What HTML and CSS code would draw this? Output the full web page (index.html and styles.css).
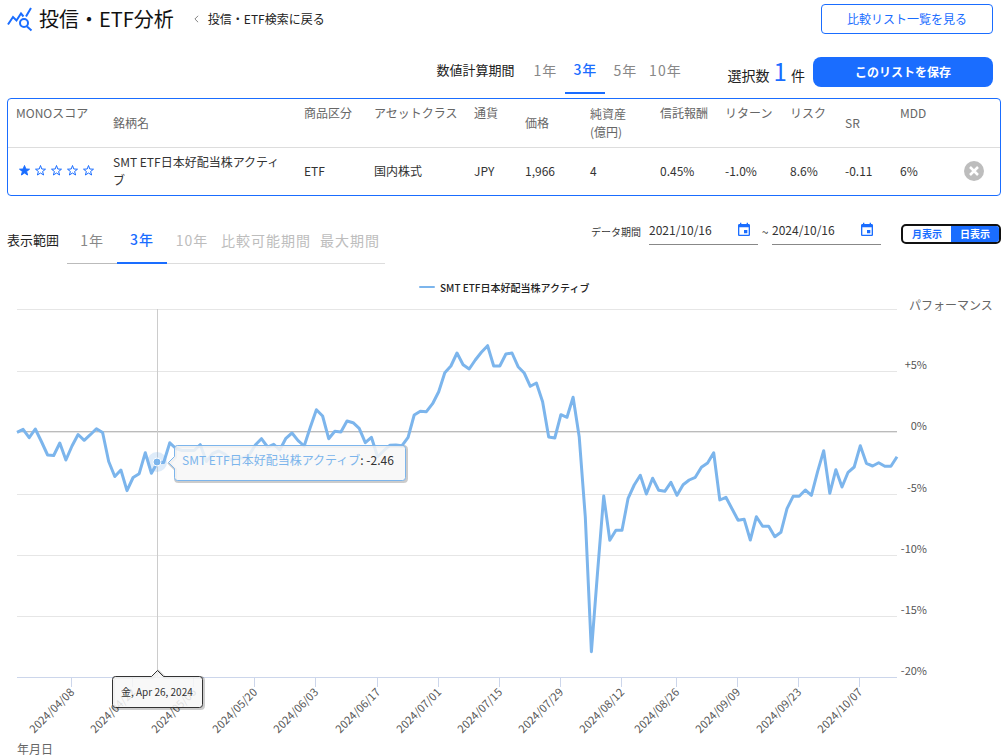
FILE: index.html
```html
<!DOCTYPE html>
<html lang="ja">
<head>
<meta charset="utf-8">
<title>投信・ETF分析</title>
<link rel="stylesheet" href="styles.css">
</head>
<body>
<header class="header">
  <svg class="logo" viewBox="0 0 26 26" aria-hidden="true"><path d="M1 18.500 6 11l3.500 3.500L14 7.500l2.500 3M19 10.500 24 2M20 20.500l4.500 4"/><circle cx="17" cy="17" r="4"/></svg>
  <h1 class="title">投信・ETF分析</h1>
  <a class="back" href="#"><svg class="chevron" viewBox="0 0 6 10" aria-hidden="true"><path d="M5 1 1 5l4 4"/></svg>投信・ETF検索に戻る</a>
  <button class="btn btn-outline" type="button">比較リスト一覧を見る</button>
</header>

<section class="controls">
  <span class="label">数値計算期間</span>
  <nav class="tabs calc-tabs">
    <button class="tab" type="button">1年</button>
    <button class="tab active" type="button">3年</button>
    <button class="tab" type="button">5年</button>
    <button class="tab" type="button">10年</button>
  </nav>
  <p class="count">選択数 <strong class="count-num">1</strong> 件</p>
  <button class="btn btn-solid" type="button">このリストを保存</button>
</section>

<div class="table-box">
  <table class="funds">
    <colgroup><col class="c-score"><col class="c-name"><col class="c-kind"><col class="c-class"><col class="c-cur"><col class="c-price"><col class="c-net"><col class="c-fee"><col class="c-ret"><col class="c-risk"><col class="c-sr"><col class="c-mdd"><col class="c-del"></colgroup>
    <thead>
      <tr><th class="top">MONOスコア</th><th>銘柄名</th><th class="top">商品区分</th><th class="top">アセットクラス</th><th class="top">通貨</th><th>価格</th><th>純資産<br>(億円)</th><th class="top">信託報酬</th><th class="top">リターン</th><th class="top">リスク</th><th>SR</th><th class="top">MDD</th><th></th></tr>
    </thead>
    <tbody>
      <tr>
        <td><svg class="stars" viewBox="0 0 80 16" role="img" aria-label="1 / 5">
          <defs><path id="star" d="M8 2.500 9.300 6 13 6.200 10.100 8.500 11.100 12 8 10 4.900 12 5.900 8.500 3 6.200 6.700 6Z"/></defs>
          <use class="star-on" href="#star"/><use href="#star" x="16"/><use href="#star" x="32"/><use href="#star" x="48"/><use href="#star" x="64"/>
        </svg></td>
        <td>SMT ETF日本好配当株アクティブ</td><td>ETF</td><td>国内株式</td><td>JPY</td><td>1,966</td><td>4</td><td>0.45%</td><td>-1.0%</td><td>8.6%</td><td>-0.11</td><td>6%</td>
        <td><button class="delete" type="button" aria-label="削除"><svg viewBox="0 0 20 20"><circle cx="10" cy="10" r="10"/><path d="m6 6 8 8m0-8-8 8"/></svg></button></td>
      </tr>
    </tbody>
  </table>
</div>

<section class="range">
  <span class="label">表示範囲</span>
  <nav class="tabs range-tabs">
    <button class="tab enabled" type="button">1年</button>
    <button class="tab active" type="button">3年</button>
    <button class="tab" type="button" disabled>10年</button>
    <button class="tab" type="button" disabled>比較可能期間</button>
    <button class="tab" type="button" disabled>最大期間</button>
  </nav>
  <div class="dates">
    <label class="dates-label" for="from">データ期間</label>
    <span class="date"><input id="from" type="text" value="2021/10/16"><svg viewBox="0 0 24 24" aria-hidden="true"><path d="M17 12h-5v5h5v-5zM16 1v2H8V1H6v2H5c-1.11 0-1.99.9-1.99 2L3 19c0 1.1.89 2 2 2h14c1.1 0 2-.9 2-2V5c0-1.1-.9-2-2-2h-1V1h-2zm3 18H5V8h14v11z"/></svg></span>
    <span class="tilde">~</span>
    <span class="date"><input type="text" value="2024/10/16" aria-label="終了日"><svg viewBox="0 0 24 24" aria-hidden="true"><path d="M17 12h-5v5h5v-5zM16 1v2H8V1H6v2H5c-1.11 0-1.99.9-1.99 2L3 19c0 1.1.89 2 2 2h14c1.1 0 2-.9 2-2V5c0-1.1-.9-2-2-2h-1V1h-2zm3 18H5V8h14v11z"/></svg></span>
  </div>
  <div class="switch">
    <button class="seg" type="button">月表示</button>
    <button class="seg seg-on" type="button">日表示</button>
  </div>
</section>

<svg class="chart" viewBox="0 272 1008 484" role="img" aria-label="パフォーマンス">
  <path class="legend-line" d="M420 287h14"/>
  <text class="legend" x="440" y="292">SMT ETF日本好配当株アクティブ</text>
  <text class="axis-title" x="909" y="310">パフォーマンス</text>
  <path class="grid" d="M17 309.500H897M17 371.500H897M17 432.500H897M17 494.500H897M17 555.500H897M17 616.500H897"/>
  <path class="zero" d="M17 431.500H897"/>
  <path class="axis" d="M17 677.500H897M71.500 678v9M132.500 678v9M193.500 678v9M254.500 678v9M315.500 678v9M377.500 678v9M438.500 678v9M499.500 678v9M560.500 678v9M621.500 678v9M676.500 678v9M737.500 678v9M798.500 678v9M859.500 678v9"/>
  <g class="ylabels">
    <text x="927" y="369">+5%</text><text x="927" y="430">0%</text><text x="927" y="492">-5%</text><text x="927" y="553">-10%</text><text x="927" y="614">-15%</text><text x="927" y="675">-20%</text>
  </g>
  <g id="dates" class="xlabels"></g>
  <text class="axis-title" x="17" y="754">年月日</text>
  <path class="crosshair" d="M157.500 309V678"/>
  <polyline id="series" class="series"/>
  <circle class="halo" cx="157" cy="462" r="10"/>
  <circle class="dot" cx="157" cy="462" r="4"/>
  <defs>
    <path id="tip-series" d="M177.500 445.500H402.500q3 0 3 3V477.500q0 3-3 3H177.500q-3 0-3-3V468.500L168.500 462.500 174.500 456.500V448.500q0-3 3-3Z"/>
    <path id="tip-date" d="M115.500 676.500H151.500L157.500 670.500 163.500 676.500H199.500q3 0 3 3V704.500q0 3-3 3H115.500q-3 0-3-3V679.500q0-3 3-3Z"/>
  </defs>
  <use class="tip-shadow" href="#tip-series" x="1" y="1"/>
  <use class="tip tip-series" href="#tip-series"/>
  <text class="tip-text" x="182" y="465"><tspan class="tip-name">SMT ETF日本好配当株アクティブ</tspan>: -2.46</text>
  <use class="tip-shadow" href="#tip-date" x="1" y="1"/>
  <use class="tip tip-date" href="#tip-date"/>
  <text class="tip-day" x="121" y="696">金, Apr 26, 2024</text>
</svg>
<script src="chart.js"></script>
</body>
</html>
```
FILE: styles.css
```css
* { box-sizing: border-box; }
body {
  margin: 0;
  font-family: "Noto Sans CJK JP", "Noto Sans", sans-serif;
  font-size: 12px;
  line-height: 18px;
  color: #333;
  background: #fff;
  overflow-x: hidden;
}
button, input { font: inherit; color: inherit; background: none; border: 0; padding: 0; margin: 0; }
button { cursor: pointer; }

.header { display: flex; align-items: center; height: 40px; padding: 0 15px 2px 7px; }
.logo { width: 26px; height: 26px; fill: none; stroke: #1a6dff; stroke-width: 2; }
.title { margin: 0 0 0 6px; font-size: 20px; line-height: 30px; font-weight: 400; color: #111; }
.back { display: flex; align-items: center; gap: 9px; margin-left: 20px; color: #222; text-decoration: none; }
.chevron { width: 5px; height: 8px; fill: none; stroke: #666; }
.btn { text-align: center; }
.btn-outline { margin-left: auto; width: 172px; height: 30px; border: 1px solid #1a6dff; border-radius: 4px; color: #1a6dff; }
.btn-solid { width: 180px; height: 30px; border-radius: 8px; background: #1a6dff; color: #fff; font-weight: 700; }

.controls { display: flex; align-items: center; justify-content: flex-end; height: 58px; padding: 0 15px 4px 0; }
.controls .btn-solid { margin: 10px 0 0 8px; }
.label { font-size: 13px; color: #222; }
.controls .label { margin-top: 6px; }
.tabs { display: flex; }
.tab { font-size: 14px; letter-spacing: 1px; color: #888; white-space: nowrap; }
.tab.active { color: #1a6dff; border-bottom: 2px solid #1a6dff; font-weight: 500; }
.calc-tabs { margin: 6px 0 0 11px; }
.calc-tabs .tab { height: 48px; width: 40px; }
.count { margin: 12px 0 0 42px; font-size: 14px; line-height: 30px; color: #222; }
.count-num { font-size: 24px; font-weight: 400; color: #1a6dff; margin: 0 1px; }

.table-box { margin: 0 7px; border: 1px solid #1a6dff; border-radius: 4px; }
.funds { width: 100%; table-layout: fixed; border-collapse: collapse; }
.funds th, .funds td { padding: 5px 8px; text-align: left; }
.funds th { height: 48px; font-weight: 400; color: #666; border-bottom: 1px solid #ddd; }
.funds td { height: 48px; }
.funds .top { vertical-align: top; }
.c-score { width: 97px; } .c-name { width: 191px; } .c-kind { width: 70px; } .c-class { width: 100px; }
.c-cur { width: 51px; } .c-price { width: 65px; } .c-net { width: 70px; } .c-fee { width: 65px; }
.c-ret { width: 65px; } .c-risk { width: 55px; } .c-sr { width: 55px; } .c-mdd { width: 64px; }
.stars { display: block; width: 81px; height: 16px; fill: none; stroke: #1a6dff; }
.star-on { fill: #1a6dff; }
.delete { display: block; width: 20px; height: 20px; }
.delete svg { display: block; fill: #bdbdbd; }
.delete path { stroke: #fff; stroke-width: 2.5; }

.range { display: flex; align-items: center; height: 76px; padding: 0 7px; }
.range .label { margin-top: 12px; }
.range-tabs { margin: 12px 0 0 8px; }
.range-tabs .tab { height: 48px; border-bottom: 1px solid #ddd; padding: 0 5px 0 4px; color: #bdbdbd; }
.range-tabs .tab:nth-child(-n+3) { width: 50px; padding: 0; }
.range-tabs .enabled { color: #888; border-color: #bbb; }
.range-tabs .active { color: #1a6dff; border-bottom: 2px solid #1a6dff; }
.dates { display: flex; align-items: center; margin: 0 0 4px auto; }
.dates-label { font-size: 10px; margin-right: 8px; }
.date { display: flex; align-items: center; width: 109px; height: 26px; border-bottom: 1px solid #888; padding: 0 6px 3px 0; }
.date input { flex: 1; min-width: 0; }
.date svg { width: 16px; height: 16px; fill: #1a6dff; }
.tilde { width: 14px; text-align: center; }
.switch { display: flex; width: 100px; height: 20px; margin-left: 20px; border: 2px solid #111; border-radius: 5px; overflow: hidden; }
.seg { flex: 1; font-size: 10px; line-height: 16px; font-weight: 700; color: #1a6dff; }
.seg-on { background: #1a6dff; color: #fff; }

.chart { display: block; width: 100%; }
.legend { font-size: 10px; font-weight: 500; fill: #222; }
.legend-line { stroke: #7cb5ec; stroke-width: 2; stroke-linecap: round; }
.axis-title { font-size: 12px; fill: #666; }
.grid { stroke: #e6e6e6; }
.zero { stroke: #bbb; }
.axis { stroke: #ccd6eb; }
.ylabels, .xlabels { font-size: 11px; fill: #555; text-anchor: end; }
.crosshair { stroke: #ccc; }
.series { fill: none; stroke: #7cb5ec; stroke-width: 3; stroke-linejoin: round; }
.halo { fill: #7cb5ec; opacity: .25; }
.dot { fill: #7cb5ec; stroke: #fff; }
.tip { fill: #f7f7f7; fill-opacity: .85; }
.tip-shadow { fill: none; stroke: #000; stroke-width: 3; stroke-opacity: .2; }
.tip-series { stroke: #7cb5ec; }
.tip-date { stroke: #333; }
.tip-text { font-size: 12px; fill: #333; }
.tip-name { fill: #7cb5ec; }
.tip-day { font-size: 10px; fill: #333; }
```
FILE: chart.js
```js
const levels = [
  432.3,429.3,437.7,429,441.5,455,455.5,443,460,446,434.5,440.3,434.7,428.7,432.5,461.5,476.5,470,490.6,477.5,
  473.7,452.7,473.3,462.3,462.5,442.8,448.5,450.5,450.5,450.5,444.7,461.5,453.5,451,454,460,458,458,455,445,
  438.7,447,444.3,450,438.3,433,440.6,446,427.3,409.7,416,438.7,431.3,432,421,422.7,428.3,442.7,437.3,456.7,
  450.7,445.3,445,445.7,437.3,415,411.3,411.7,403.7,391.7,372.7,366,353,364.7,369,360,352.3,345.7,366,366,
  354,353,366.7,373,386.3,383,401.7,437,438,414.7,417.3,397.3,436.7,517,651.7,571.7,496,540.3,530.3,530.3,
  498.3,485,475.3,494,478.2,490.3,491.3,482.3,495.3,484.7,480,477.3,467.3,463,452.7,500,497.3,508.7,520.3,519.3,
  540,516.7,526.3,526.3,536.7,532.3,508.7,496.3,496.3,490,495.3,471.7,450.7,493.3,469.7,487,472.3,467,445.7,463.3,
  466,462.7,466.3,466.3,456.7
];
document.getElementById("series").setAttribute(
  "points",
  levels.map((y, i) => `${(17 + i * 880 / 144).toFixed(1)},${y}`).join(" ")
);

const ticks = {
  "2024/04/08": 71, "2024/04/22": 132, "2024/05/06": 193, "2024/05/20": 254, "2024/06/03": 315,
  "2024/06/17": 377, "2024/07/01": 438, "2024/07/15": 499, "2024/07/29": 560, "2024/08/12": 621,
  "2024/08/26": 676, "2024/09/09": 737, "2024/09/23": 798, "2024/10/07": 859
};
const group = document.getElementById("dates");
for (const [day, x] of Object.entries(ticks)) {
  const text = document.createElementNS("http://www.w3.org/2000/svg", "text");
  text.setAttribute("transform", `translate(${x + 4} 693) rotate(-45)`);
  text.textContent = day;
  group.append(text);
}
```
